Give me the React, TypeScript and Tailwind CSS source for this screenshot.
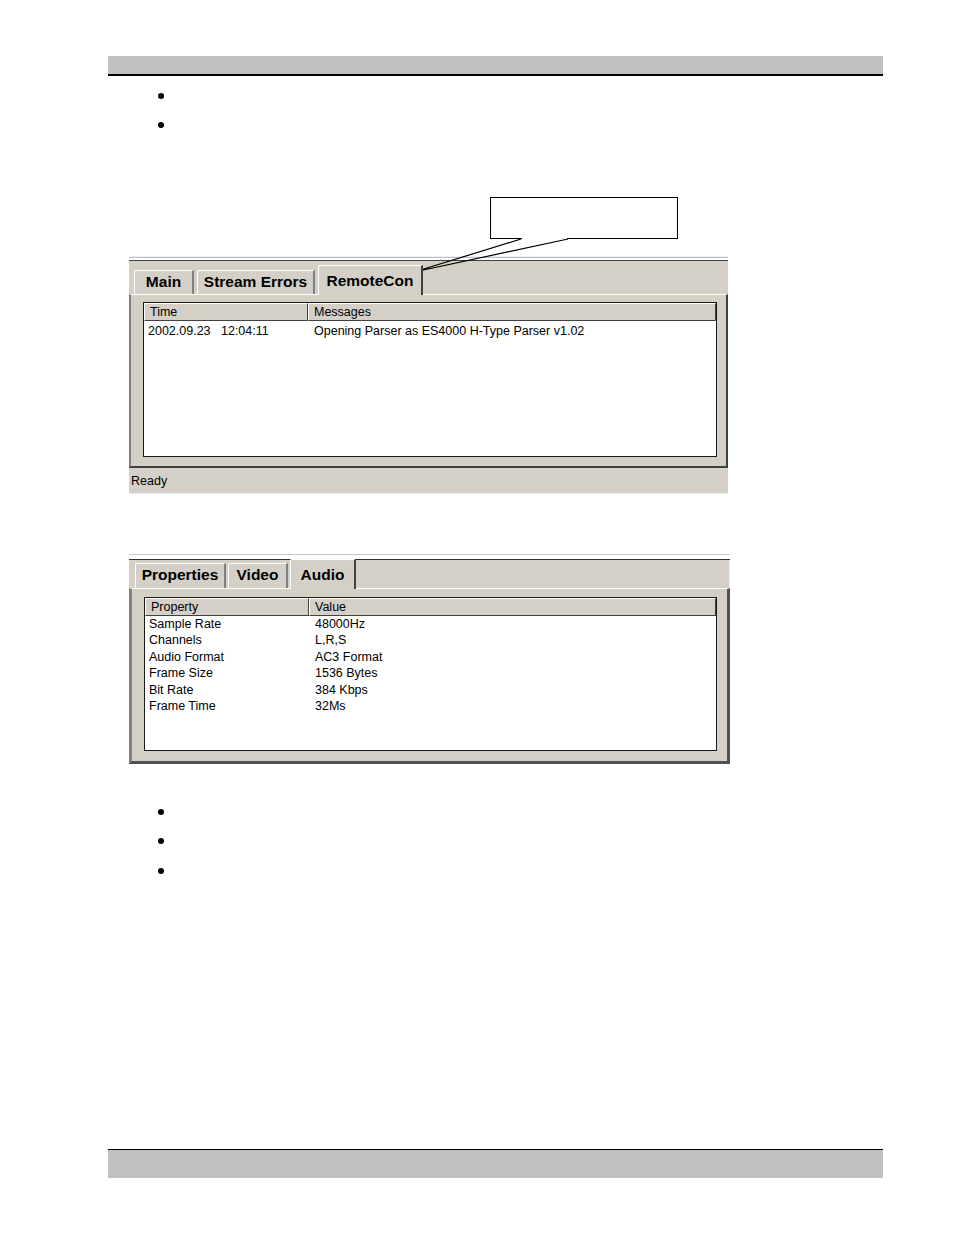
import React from "react"

const win = "bg-[#d4d0c8]"

function Bullets({ count, className }: { count: number; className?: string }) {
  return (
    <ul className={className}>
      {Array.from({ length: count }).map((_, i) => (
        <li key={i} className="h-[29.5px] flex items-center">
          <span className="block w-[6px] h-[6px] rounded-full bg-black" />
        </li>
      ))}
    </ul>
  )
}

function Tab({ label, selected = false, width, short = false }: { label: string; selected?: boolean; width: number; short?: boolean }) {
  if (selected) {
    return (
      <div
        className={`relative z-10 -mb-px h-[30px] ${win} border-t border-l border-white border-r-2 border-r-[#404040] rounded-tl-[2px] flex items-start justify-center pt-[3px] text-[15.5px] font-bold`}
        style={{ width }}
      >
        {label}
      </div>
    )
  }
  return (
    <div
      className={`${short ? "h-[25px]" : "h-[24px]"} ${win} border-t border-l border-white border-r-2 border-r-[#808080] rounded-tl-[2px] flex items-center justify-center pb-[2px] text-[15.5px] font-bold`}
      style={{ width }}
    >
      {label}
    </div>
  )
}

function HeaderCell({ label, width }: { label: string; width?: number }) {
  return (
    <div
      className={`h-full ${win} border-t border-l border-white border-r border-b border-r-[#404040] border-b-[#404040] pl-[5px] flex items-center text-[12.5px] leading-none ${width ? "" : "flex-1"}`}
      style={width ? { width } : undefined}
    >
      {label}
    </div>
  )
}

const audioRows = [
  ["Sample Rate", "48000Hz"],
  ["Channels", "L,R,S"],
  ["Audio Format", "AC3 Format"],
  ["Frame Size", "1536 Bytes"],
  ["Bit Rate", "384 Kbps"],
  ["Frame Time", "32Ms"],
]

export default function App() {
  return (
    <div className="w-[954px] h-[1235px] bg-white text-black font-['Liberation_Sans',Arial,sans-serif]">
      {/* cabecera gris */}
      <div className="ml-[108px] w-[775px] pt-[56px]">
        <div className="h-[20px] bg-[#c0c0c0] border-b-2 border-black" />
      </div>

      <Bullets count={2} className="ml-[158px] mt-[5px]" />

      {/* globo de texto */}
      <div className="relative ml-[490px] mt-[57px] w-[188px] h-[42px] border border-black bg-white">
        <svg className="absolute left-[-80px] top-[40px] overflow-visible" width="170" height="36" viewBox="0 0 170 36">
          <line x1="111" y1="1" x2="156" y2="1" stroke="white" strokeWidth="3" />
          <polyline points="110,1 3,34 157,1" fill="none" stroke="black" strokeWidth="1.2" />
        </svg>
      </div>

      {/* ventana 1 */}
      <div className="ml-[129px] mt-[17px] w-[599px]">
        <div className="h-px bg-[#f0f0f0]" />
        <div className="h-px bg-[#c0c0c0]" />
        <div className="h-[2px] bg-white" />
        <div className="h-px bg-[#404040]" />
        <div className={`h-[33px] ${win} flex items-end gap-[3px] pl-[5px]`}>
          <Tab label="Main" width={60} />
          <Tab label="Stream Errors" width={118} />
          <Tab label="RemoteCon" width={105} selected />
        </div>
        <div className={`${win} border-t border-t-white border-l-2 border-l-[#808080] border-r-2 border-r-[#404040] border-b-2 border-b-[#404040] pt-[7px] pl-[12px] pr-[9px] pb-[9px]`}>
          <div className="h-[155px] bg-white border border-[#1a1a1a] text-[12.5px]">
            <div className="h-[18px] flex">
              <HeaderCell label="Time" width={164} />
              <HeaderCell label="Messages" />
            </div>
            <div className="flex h-[16px] mt-[2px] items-center leading-none">
              <div className="w-[164px] pl-[4px] whitespace-pre">2002.09.23   12:04:11</div>
              <div className="pl-[6px]">Opening Parser as ES4000 H-Type Parser v1.02</div>
            </div>
          </div>
        </div>
        <div className={`h-[26px] ${win} border-b border-[#ececec] pl-[2px] pt-[2px] flex items-center text-[12.5px]`}>
          Ready
        </div>
      </div>

      {/* ventana 2 */}
      <div className="ml-[129px] mt-[60px] w-[601px]">
        <div className="h-px bg-[#c8c8c8]" />
        <div className="h-[4px] bg-white" />
        <div className="h-px bg-[#303030]" />
        <div className={`h-[28px] ${win} border-r border-r-[#f0f0f0] flex items-end gap-[2px] pl-[6px]`}>
          <Tab label="Properties" width={91} short />
          <Tab label="Video" width={60} short />
          <Tab label="Audio" width={66} selected />
        </div>
        <div className={`${win} border-t border-t-white border-l-[3px] border-l-[#808080] border-r-[3px] border-r-[#505050] border-b-[3px] border-b-[#505050] pt-[8px] pl-[12px] pr-[10px] pb-[10px]`}>
          <div className="h-[154px] bg-white border border-[#1a1a1a] text-[12.5px]">
            <div className="h-[18px] flex">
              <HeaderCell label="Property" width={164} />
              <HeaderCell label="Value" />
            </div>
            {audioRows.map(([k, v]) => (
              <div key={k} className="flex h-[16.4px] items-center leading-none">
                <div className="w-[164px] pl-[4px]">{k}</div>
                <div className="pl-[6px]">{v}</div>
              </div>
            ))}
          </div>
        </div>
      </div>

      <Bullets count={3} className="ml-[158px] mt-[33px]" />

      {/* pie gris */}
      <div className="ml-[108px] w-[775px] mt-[263px] h-[29px] bg-[#c0c0c0] border-t border-black" />
    </div>
  )
}
